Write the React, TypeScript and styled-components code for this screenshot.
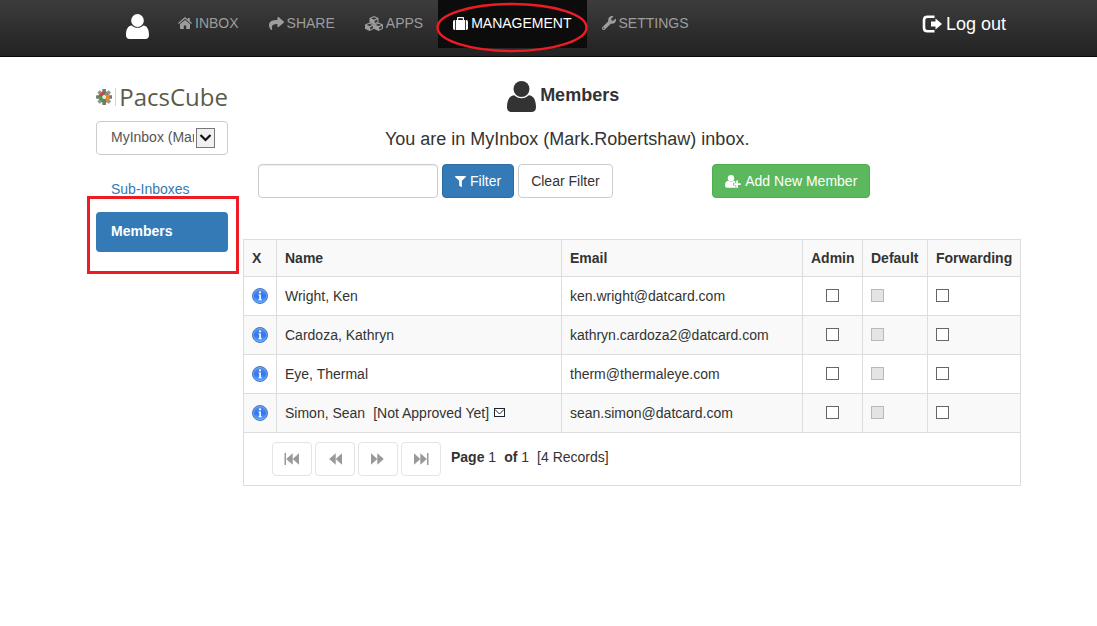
import React from "react";
import styled, { createGlobalStyle, css } from "styled-components";
import { FaShare, FaWrench, FaFilter } from "react-icons/fa";

const Global = createGlobalStyle`
  *, *::before, *::after { box-sizing: border-box; }
  body {
    margin: 0;
    background: #fff;
    color: #333;
    font: 14px/20px "Liberation Sans", Arial, sans-serif;
  }
  button, input, select { font: inherit; }
`;

const NavBar = styled.header`
  height: 57px;
  padding-left: 5px;
  border-bottom: 1px solid #080808;
  background: linear-gradient(#3c3c3c, #222);
`;

const NavInner = styled.div`
  display: flex;
  align-items: flex-start;
  max-width: 940px;
  margin: 0 auto;
  padding: 0 15px 0 45px;
`;

const UserLink = styled.a`
  width: 37px;
  padding-top: 14px;
  color: #fff;
  svg { display: block; }
`;

const NavList = styled.nav`
  display: flex;
  flex: 1;
`;

const NavLink = styled.a<{ $active?: boolean }>`
  position: relative;
  display: flex;
  align-items: center;
  gap: 3px;
  height: 48px;
  padding: 0 15px 2px;
  color: ${(p) => (p.$active ? "#fff" : "#9d9d9d")};
  background: ${(p) => (p.$active ? "#0c0c0c" : "transparent")};
  text-decoration: none;
  text-transform: uppercase;
  white-space: nowrap;
`;

const Ring = styled.svg`
  position: absolute;
  z-index: 1;
  top: 2px;
  left: -2px;
  pointer-events: none;
`;

const LogOut = styled.a`
  display: flex;
  align-items: center;
  gap: 4px;
  height: 48px;
  color: #fff;
  font-size: 18px;
  text-decoration: none;
`;

const Page = styled.div`
  padding-left: 5px;
`;

const Columns = styled.div`
  display: grid;
  grid-template-columns: 147px minmax(0, 1fr);
  max-width: 940px;
  margin: 0 auto;
`;

const Sidebar = styled.aside`
  padding: 28px 0 0 15px;
  width: 147px;
`;

const Logo = styled.a`
  display: flex;
  align-items: center;
  gap: 3px;
  height: 24px;
  margin-bottom: 12px;
  color: #5b5b47;
  font: 24px/24px "Open Sans", sans-serif;
  text-decoration: none;
`;

const SelectWrap = styled.div`
  position: relative;
  margin-bottom: 15px;
`;

const InboxSelect = styled.select`
  display: block;
  width: 100%;
  height: 34px;
  padding: 0 33px 2px 14px;
  border: 1px solid #ccc;
  border-radius: 4px;
  background: #fff;
  color: #555;
  appearance: none;
  overflow: hidden;
`;

const SelectArrow = styled.span`
  position: absolute;
  top: 7px;
  right: 13px;
  display: grid;
  place-items: center;
  width: 19px;
  height: 20px;
  border: 1px solid #777;
  background: #f0f0f0;
  pointer-events: none;
`;

const SideNav = styled.nav`
  display: flex;
  flex-direction: column;
  gap: 2px;
`;

const SideLink = styled.a<{ $active?: boolean }>`
  position: relative;
  height: 40px;
  padding: 9px 15px;
  border-radius: 4px;
  color: #337ab7;
  text-decoration: none;
  ${(p) => p.$active && css`
    background: #337ab7;
    color: #fff;
    font-weight: bold;
  `}
`;

const Frame = styled.span`
  position: absolute;
  z-index: 1;
  inset: -16px -11px -22px -9px;
  border: 3px solid #ed1c24;
  pointer-events: none;
`;

const Main = styled.main`
  padding: 24px 0 0 15px;
`;

const Intro = styled.div`
  width: 83.33%;
`;

const Title = styled.h1`
  display: flex;
  justify-content: center;
  gap: 4px;
  height: 31px;
  margin: 0;
  padding-right: 8px;
  font-size: 18px;
  line-height: 28px;
`;

const Notice = styled.p`
  margin: 17px 0 15px;
  font-size: 18px;
  line-height: 20px;
  text-align: center;
`;

const FilterBar = styled.form`
  display: flex;
  gap: 4px;
  padding: 0 21px 0 15px;
`;

const FilterInput = styled.input`
  width: 180px;
  height: 34px;
  padding: 6px 12px;
  border: 1px solid #ccc;
  border-radius: 4px;
  box-shadow: inset 0 1px 1px rgba(0, 0, 0, 0.075);
`;

const tones = {
  primary: css`background: #337ab7; border-color: #2e6da4; color: #fff;`,
  success: css`background: #5cb85c; border-color: #4cae4c; color: #fff;`,
  plain: css`background: #fff; border-color: #ccc; color: #333;`,
};

const Button = styled.button<{ $tone: keyof typeof tones; $end?: boolean }>`
  display: flex;
  align-items: center;
  justify-content: center;
  gap: 4px;
  height: 34px;
  padding: 0 12px;
  border: 1px solid;
  border-radius: 4px;
  white-space: nowrap;
  ${(p) => tones[p.$tone]}
  ${(p) => p.$end && css`margin-left: auto;`}
`;

const Table = styled.table`
  width: 100%;
  margin-top: 41px;
  border-collapse: collapse;
  table-layout: fixed;
`;

const HeadCell = styled.th`
  height: 37px;
  padding: 0 8px;
  border: 1px solid #ddd;
  background: #f9f9f9;
  text-align: left;
  white-space: nowrap;
`;

const Row = styled.tr`
  height: 39px;
  &:nth-child(even) { background: #f9f9f9; }
`;

const Cell = styled.td<{ $center?: boolean }>`
  padding: 0 8px 1px;
  border: 1px solid #ddd;
  text-align: left;
  ${(p) => p.$center && css`input { margin: 0 auto; }`}
`;

const InfoButton = styled.button`
  display: block;
  padding: 0;
  border: 0;
  background: none;
  svg { display: block; }
`;

const Check = styled.input`
  display: block;
  width: 13px;
  height: 13px;
  margin: 0;
  border: 1px solid #666;
  background: #fff;
  appearance: none;
  &:checked { background: #337ab7; }
  &:disabled { border-color: #b9b9b9; background: #e4e4e4; }
`;

const NameLine = styled.div`
  display: flex;
  align-items: center;
`;

const Status = styled.span`
  margin: 0 5px 0 8px;
`;

const Pager = styled.div`
  display: flex;
  gap: 3px;
  height: 51px;
  padding: 9px 0 0 20px;
`;

const PageButton = styled.button`
  display: grid;
  place-items: center;
  width: 40px;
  height: 34px;
  padding: 0;
  border: 1px solid #e4e4e4;
  border-radius: 4px;
  background: #fff;
  color: #999;
`;

const PageInfo = styled.p`
  display: flex;
  gap: 8px;
  margin: 5px 0 0 7px;
`;

const Person = ({ width, height }: { width: number; height: number }) => (
  <svg width={width} height={height} viewBox="0 0 28 31" preserveAspectRatio="none" fill="currentColor" aria-hidden="true">
    <ellipse cx="14" cy="8" rx="7.7" ry="8" />
    <path d="M7 14.3C9 16.2 11.200 17.200 14 17.200S19 16.200 21 14.300C25.500 14.600 28 19 28 26C28 29.200 26.500 31 23.500 31H4.500C1.500 31 0 29.200 0 26C0 19 2.500 14.600 7 14.300Z" />
  </svg>
);

const HomeIcon = () => (
  <svg width="14" height="12" viewBox="0 0 14 12" fill="currentColor" aria-hidden="true">
    <path d="M7 0L9.800 2.400V0.900H11.800V4.100L14 6L13.200 6.900L7 1.700L0.800 6.900L0 6Z" />
    <path d="M7 2.900L12 7.100V11.300Q12 12 11.300 12H8.200V8.500H5.800V12H2.700Q2 12 2 11.300V7.100Z" />
  </svg>
);

const Cube = ({ x, y }: { x: number; y: number }) => (
  <g transform={`translate(${x} ${y})`}>
    <path d="M4.500 0L9 1.900V6.300L4.500 8.500L0 6.300V1.900Z" fill="currentColor" />
    <path d="M4.500 1.200L7.300 2.400L4.500 3.600L1.700 2.400Z" fill="#303030" />
    <path d="M5.200 4.700L7.900 3.500V5.700L5.200 7Z" fill="#303030" />
  </g>
);

const CubesIcon = () => (
  <svg width="18" height="15" viewBox="0 0 18 15" aria-hidden="true">
    <Cube x={4.5} y={0} />
    <Cube x={0} y={6.5} />
    <Cube x={9} y={6.5} />
  </svg>
);

const SuitcaseIcon = () => (
  <svg width="15" height="13" viewBox="0 0 15 13" fill="currentColor" aria-hidden="true">
    <path d="M2.200 3V13H1.700Q0 13 0 11.300V4.700Q0 3 1.700 3ZM12.800 3V13H13.300Q15 13 15 11.300V4.700Q15 3 13.300 3Z" />
    <path fillRule="evenodd" d="M3 3H4V1Q4 0 5 0H10Q11 0 11 1V3H12V13H3ZM5.200 3H9.800V1.200H5.200Z" />
  </svg>
);

const AddUserIcon = () => (
  <svg width="16" height="13" viewBox="0 0 16 13" fill="currentColor" aria-hidden="true">
    <circle cx="6" cy="3.200" r="3.200" />
    <path d="M3 5.700Q6 8 9 5.700Q9.800 5.800 10.400 6.500V7.700H8.200V10.500H10.700V12.500Q10.200 12.800 9.500 12.800H2Q0 12.800 0 10.500Q0 6 3 5.700Z" />
    <path d="M11.200 5.500H13V8.200H15.700V10H13V12.700H11.200V10H9V8.200H11.200Z" />
  </svg>
);

const SignOut = () => (
  <svg width="20" height="18" viewBox="0 0 20 18" aria-hidden="true">
    <path d="M12.500 1.700H5.500Q2 1.700 2 5V13Q2 16.300 5.500 16.300H12.500" fill="none" stroke="#fff" strokeWidth="2.600" />
    <path d="M9 6.500H13.500V3.500L20 9L13.500 14.500V11.500H9Z" fill="#fff" />
  </svg>
);

const gearColours = ["#6e706b", "#8b8d85", "#e88a2a", "#e88a2a", "#75776e", "#3f9d50", "#3f9d50", "#d9442f"];

const LogoMark = () => (
  <svg width="17" height="18" viewBox="0 0 17 18" aria-hidden="true">
    {gearColours.map((c, i) => (
      <g key={i} transform={`rotate(${i * 45} 8.500 9)`}>
        <rect x="6.600" y="0.600" width="3.800" height="4" rx="0.600" fill={i % 2 ? "#969890" : "#777970"} />
        <path d="M5.800 3.600H11.200L9.700 7.500H7.300Z" fill={c} />
      </g>
    ))}
    <circle cx="8.500" cy="9" r="2" fill="#e8ece4" />
  </svg>
);

const Divider = styled.span`
  width: 1px;
  height: 18px;
  background: #d5d5d5;
`;

const Info = () => (
  <svg width="16" height="16" viewBox="0 0 16 16" aria-hidden="true">
    <defs>
      <linearGradient id="infoFill" x1="0" y1="0" x2="0" y2="1">
        <stop offset="0" stopColor="#5b93e8" />
        <stop offset="0.500" stopColor="#2f76f0" />
        <stop offset="1" stopColor="#5aa8ff" />
      </linearGradient>
    </defs>
    <circle cx="8" cy="8" r="7.500" fill="url(#infoFill)" stroke="#4a74bc" />
    <circle cx="8" cy="8" r="6.500" fill="none" stroke="#86b2f4" strokeWidth="0.700" />
    <circle cx="8" cy="4.300" r="1.100" fill="#fff" />
    <path d="M6.500 6.500H8.900V11.300H9.800V12.200H6.500V11.300H7.300V7.400H6.500Z" fill="#fff" />
  </svg>
);

const Mail = () => (
  <svg width="11" height="9" viewBox="0 0 11 9" fill="none" stroke="#1b2433" aria-hidden="true">
    <rect x="0.500" y="0.500" width="10" height="8" fill="#fff" />
    <path d="M1 1.500L5.500 6L10 1.500" />
  </svg>
);

const Skip = ({ forward, bar }: { forward?: boolean; bar?: boolean }) => (
  <svg width="16" height="14" viewBox="0 0 16 14" fill="currentColor" aria-hidden="true">
    <g transform={forward ? "translate(16 0) scale(-1 1)" : undefined}>
      {bar && <rect x="0.500" y="1" width="1.500" height="12" />}
      <path d="M8.700 1.200V12.800L2.200 7ZM15 1.200V12.800L8.700 7Z" />
    </g>
  </svg>
);

const members = [
  { name: "Wright, Ken", email: "ken.wright@datcard.com" },
  { name: "Cardoza, Kathryn", email: "kathryn.cardoza2@datcard.com" },
  { name: "Eye, Thermal", email: "therm@thermaleye.com" },
  { name: "Simon, Sean", email: "sean.simon@datcard.com", pending: true },
];

export default function App() {
  return (
    <>
      <Global />
      <NavBar>
        <NavInner>
          <UserLink href="#profile" aria-label="Profile"><Person width={23} height={25} /></UserLink>
          <NavList>
            <NavLink href="#inbox"><HomeIcon />Inbox</NavLink>
            <NavLink href="#share"><FaShare size={15} />Share</NavLink>
            <NavLink href="#apps"><CubesIcon />Apps</NavLink>
            <NavLink href="#management" $active>
              <SuitcaseIcon />Management
              <Ring width="152" height="51" viewBox="0 0 152 51" aria-hidden="true">
                <ellipse cx="76" cy="25.500" rx="74.500" ry="23.500" fill="none" stroke="#ed1c24" strokeWidth="2.500" />
              </Ring>
            </NavLink>
            <NavLink href="#settings"><FaWrench size={14} />Settings</NavLink>
          </NavList>
          <LogOut href="#logout"><SignOut />Log out</LogOut>
        </NavInner>
      </NavBar>
      <Page>
        <Columns>
          <Sidebar>
            <Logo href="#home"><LogoMark /><Divider />PacsCube</Logo>
            <SelectWrap>
              <InboxSelect aria-label="Inbox">
                <option>MyInbox (Mark.Robertshaw)</option>
              </InboxSelect>
              <SelectArrow>
                <svg width="13" height="8" viewBox="0 0 13 8" fill="none" stroke="#111" strokeWidth="2.200" aria-hidden="true">
                  <path d="M1.500 1L6.500 6L11.500 1" />
                </svg>
              </SelectArrow>
            </SelectWrap>
            <SideNav>
              <SideLink href="#sub-inboxes">Sub-Inboxes</SideLink>
              <SideLink href="#members" $active>Members<Frame /></SideLink>
            </SideNav>
          </Sidebar>
          <Main>
            <Intro>
              <Title><Person width={29} height={31} />Members</Title>
              <Notice>You are in MyInbox (Mark.Robertshaw) inbox.</Notice>
              <FilterBar onSubmit={(e) => e.preventDefault()}>
                <FilterInput type="text" aria-label="Filter members" />
                <Button type="submit" $tone="primary"><FaFilter size={11} />Filter</Button>
                <Button type="reset" $tone="plain">Clear Filter</Button>
                <Button type="button" $tone="success" $end><AddUserIcon />Add New Member</Button>
              </FilterBar>
            </Intro>
            <Table>
              <colgroup>
                <col style={{ width: 33 }} />
                <col />
                <col style={{ width: 241 }} />
                <col style={{ width: 60 }} />
                <col style={{ width: 65 }} />
                <col style={{ width: 93 }} />
              </colgroup>
              <thead>
                <tr>
                  {["X", "Name", "Email", "Admin", "Default", "Forwarding"].map((h) => (
                    <HeadCell key={h} scope="col">{h}</HeadCell>
                  ))}
                </tr>
              </thead>
              <tbody>
                {members.map((m) => (
                  <Row key={m.email}>
                    <Cell><InfoButton type="button" aria-label={`Details of ${m.name}`}><Info /></InfoButton></Cell>
                    <Cell>
                      <NameLine>{m.name}{m.pending && <><Status>[Not Approved Yet]</Status><Mail /></>}</NameLine>
                    </Cell>
                    <Cell>{m.email}</Cell>
                    <Cell $center><Check type="checkbox" aria-label={`${m.name} admin`} /></Cell>
                    <Cell><Check type="checkbox" disabled aria-label={`${m.name} default`} /></Cell>
                    <Cell><Check type="checkbox" aria-label={`${m.name} forwarding`} /></Cell>
                  </Row>
                ))}
              </tbody>
              <tfoot>
                <tr>
                  <Cell colSpan={6}>
                    <Pager>
                      <PageButton type="button" aria-label="First page"><Skip bar /></PageButton>
                      <PageButton type="button" aria-label="Previous page"><Skip /></PageButton>
                      <PageButton type="button" aria-label="Next page"><Skip forward /></PageButton>
                      <PageButton type="button" aria-label="Last page"><Skip forward bar /></PageButton>
                      <PageInfo>
                        <span><b>Page</b> 1</span>
                        <span><b>of</b> 1</span>
                        <span>[4 Records]</span>
                      </PageInfo>
                    </Pager>
                  </Cell>
                </tr>
              </tfoot>
            </Table>
          </Main>
        </Columns>
      </Page>
    </>
  );
}
